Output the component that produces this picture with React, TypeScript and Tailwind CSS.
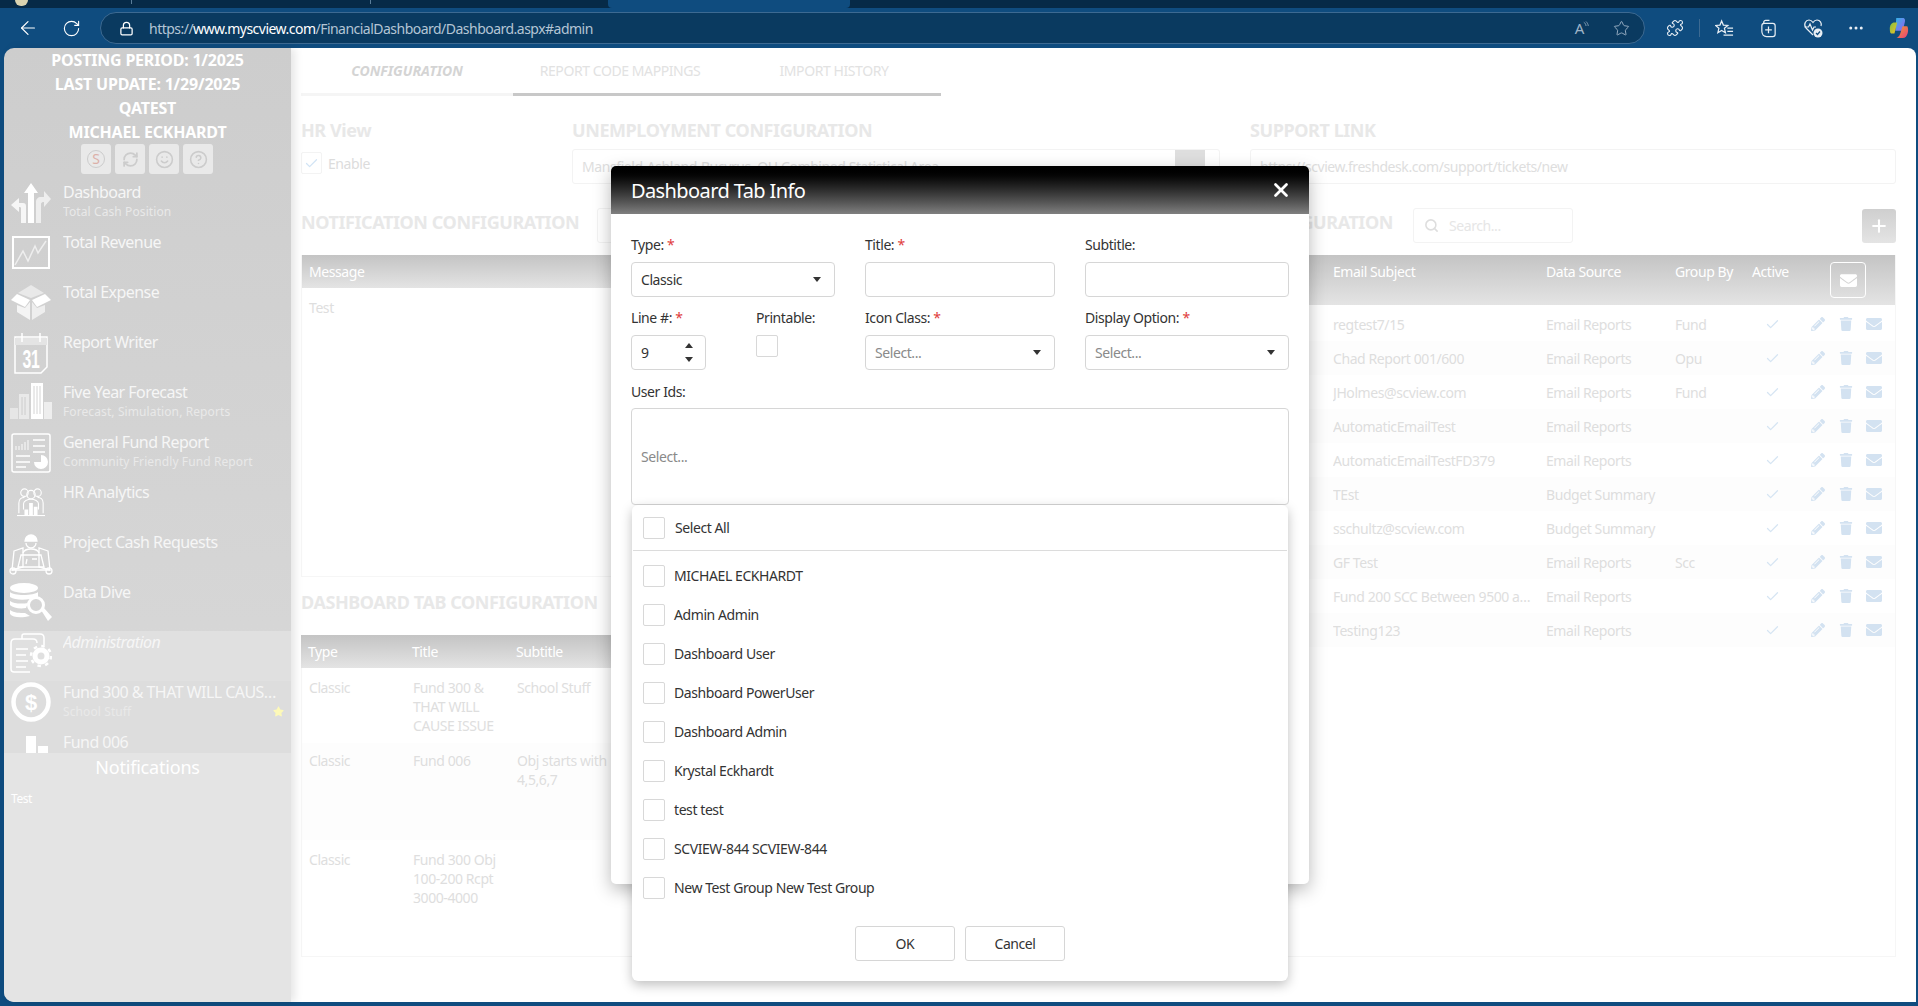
import { ArrowLeft, RotateCw, Lock, Star, Puzzle, Plus, X, Search, Check, MoreHorizontal, RefreshCw, Smile, HelpCircle } from "lucide-react";
import { FaPencilAlt, FaTrash, FaEnvelope, FaStar } from "react-icons/fa";
import type { ReactNode } from "react";

const wh = "#ffffff";

const icons: Record<string, ReactNode> = {
    dashboard: (
        <svg viewBox="0 0 40 40" className="w-10 h-10" fill={wh}>
            <path d="M20 0l7 10h-4v30h-6V10h-4z" />
            <path d="M25 40V19c0-3 2-5 5-5h3V8l7 8-7 8v-5h-1c-1 0-2 1-2 2v19z" fill="#eeeeee" />
            <path d="M15 40V23c0-2-1-3-3-3H8v-5l-8 7 8 7v-5h1c1 0 1 1 1 2v14z" fill="#f6f6f6" />
        </svg>
    ),
    revenue: (
        <svg viewBox="0 0 40 40" className="w-10 h-10" fill="none" stroke={wh}>
            <rect x="2" y="4" width="36" height="31" strokeWidth="2" />
            <path d="M4 32l8-14 5 10 7-15 3 7 8-12" strokeWidth="1.500" stroke="#eeeeee" />
        </svg>
    ),
    expense: (
        <svg viewBox="0 0 40 40" className="w-10 h-10" fill={wh}>
            <path d="M20 2L33 10 20 15 7 10z" fill="#e9e9e9" />
            <path d="M6 11l13 6-5 7-14-7z" />
            <path d="M34 11l6 6-14 7-5-7z" />
            <path d="M6 22l8 3 5-6v18L6 29z" fill="#f4f4f4" />
            <path d="M34 22l-8 3-5-6v18l13-8z" fill="#eeeeee" />
        </svg>
    ),
    report: (
        <svg viewBox="0 0 40 44" className="w-10 h-11 -mt-[2px]" fill="none" stroke={wh}>
            <path d="M4 6h32v30l-6 6H4z" strokeWidth="1.500" />
            <rect x="4" y="7" width="32" height="7" fill="#e4e4e4" stroke="none" />
            <path d="M11 2v9M29 2v9" strokeWidth="1.500" />
            <text x="20" y="37" textAnchor="middle" fontSize="25" fontFamily="'Liberation Sans', sans-serif" fontWeight="700" fill={wh} stroke="none" textLength="17" lengthAdjust="spacingAndGlyphs">31</text>
        </svg>
    ),
    forecast: (
        <svg viewBox="0 0 42 36" className="w-[42px] h-9" fill={wh}>
            <rect x="0" y="25" width="8" height="11" fill="#e6e6e6" />
            <rect x="9" y="11" width="10" height="25" fill="#e9e9e9" />
            <rect x="21" y="0" width="12" height="36" />
            <rect x="34" y="19" width="8" height="17" fill="#eeeeee" />
            <path d="M24 3v28M27 3v28M30 3v28" stroke="#d4d4d4" strokeWidth="1" />
            <path d="M12 14v18M15 14v18" stroke="#cccccc" strokeWidth="1" />
        </svg>
    ),
    fund: (
        <svg viewBox="0 0 40 40" className="w-10 h-10" fill="none" stroke={wh}>
            <rect x="1" y="1" width="38" height="38" rx="2" strokeWidth="1.500" />
            <path d="M5 17V13M8 17v-4M11 17V11M14 17V9M17 17V7" strokeWidth="1.500" stroke="#eeeeee" />
            <path d="M22 7h12M22 13h12M22 19h12M5 23h14M5 29h14M5 34h10" strokeWidth="1.500" />
            <path d="M30 22a7 7 0 1 1-7 7h7z" fill={wh} stroke="none" />
        </svg>
    ),
    hr: (
        <svg viewBox="0 0 30 32" className="w-7 h-8 mt-[3px]" fill="none" stroke={wh} strokeWidth="1.200">
            <circle cx="8" cy="6" r="4" />
            <circle cx="22" cy="6" r="4" />
            <circle cx="15" cy="8" r="4.500" />
            <path d="M2 28V17c0-4 3-6 6-6M28 28V17c0-4-3-6-6-6M7 24v-6c0-3 4-5 8-5s8 2 8 5v6" />
            <path d="M8 30V24h4v6zM13 30V17h4v13zM18 30V21h4v9z" fill={wh} stroke="none" />
            <path d="M0 30.500h30" />
        </svg>
    ),
    project: (
        <svg viewBox="0 0 44 42" className="w-11 h-[42px]" fill="none" stroke={wh} strokeWidth="1.300">
            <path d="M16 8a6 6 0 0 1 12 0z" fill={wh} />
            <path d="M17 10a5 5 0 0 0 10 0" />
            <path d="M14 20c1-3 4-4 8-4s7 1 8 4" />
            <path d="M5 18l9-3v19L3 37zM39 18l-9-3v19l11 3z" />
            <path d="M3 37h38M12 22h20l3 12H9zM17 31l1-5M23 26h5" />
            <circle cx="4" cy="38" r="3" />
            <circle cx="40" cy="38" r="3" />
        </svg>
    ),
    data: (
        <svg viewBox="0 0 42 40" className="w-[42px] h-10" fill={wh}>
            <ellipse cx="14" cy="5" rx="14" ry="5" />
            <path d="M0 9c3 4 24 4 28 0v5c-8 3-22 4-28 0zM0 18c4 3 12 3 18 2l-2 5c-6 1-13 0-16-3zM0 27c4 3 10 3 15 3l5 3c-8 2-17 2-20-2z" />
            <circle cx="26" cy="22" r="7.500" fill="none" stroke={wh} strokeWidth="3" />
            <path d="M31 27l3-2 8 9-4 4z" />
        </svg>
    ),
    admin: (
        <svg viewBox="0 0 42 40" className="w-[42px] h-10" fill="none" stroke={wh} strokeWidth="1.500">
            <path d="M12 6V3c0-1 1-2 2-2h16c3 0 4 2 4 4v7" />
            <path d="M20 39H4c-2 0-3-1-3-3V10c0-2 1-4 4-4h18c3 0 4 2 4 4" />
            <path d="M6 16h12M6 22h10M6 28h12M6 34h10" />
            <circle cx="31" cy="23" r="6" strokeWidth="5" />
            <circle cx="31" cy="23" r="10" strokeWidth="2.500" strokeDasharray="3.500 4.350" />
        </svg>
    ),
    dollar: (
        <svg viewBox="0 0 40 40" className="w-10 h-10 -mt-[1px]">
            <circle cx="20" cy="20" r="17.500" fill="none" stroke={wh} strokeWidth="4.500" />
            <text x="20" y="28" textAnchor="middle" fontSize="22" fontWeight="700" fontFamily="'Liberation Sans', sans-serif" fill={wh}>$</text>
        </svg>
    ),
    bars: (
        <svg viewBox="0 0 40 40" className="w-10 h-10" fill={wh}>
            <rect x="15" y="3" width="10" height="37" />
            <rect x="27" y="13" width="10" height="27" />
        </svg>
    ),
};

const navItems = [
    { icon: "dashboard", title: "Dashboard", sub: "Total Cash Position" },
    { icon: "revenue", title: "Total Revenue" },
    { icon: "expense", title: "Total Expense" },
    { icon: "report", title: "Report Writer" },
    { icon: "forecast", title: "Five Year Forecast", sub: "Forecast, Simulation, Reports" },
    { icon: "fund", title: "General Fund Report", sub: "Community Friendly Fund Report" },
    { icon: "hr", title: "HR Analytics" },
    { icon: "project", title: "Project Cash Requests" },
    { icon: "data", title: "Data Dive" },
    { icon: "admin", title: "Administration", active: true },
    { icon: "dollar", title: "Fund 300 & THAT WILL CAUSE ISSUE", sub: "School Stuff", star: true },
    { icon: "bars", title: "Fund 006" },
];

const emailRows = [
    ["regtest7/15", "Email Reports", "Fund"],
    ["Chad Report 001/600", "Email Reports", "Opu"],
    ["JHolmes@scview.com", "Email Reports", "Fund"],
    ["AutomaticEmailTest", "Email Reports", ""],
    ["AutomaticEmailTestFD379", "Email Reports", ""],
    ["TEst", "Budget Summary", ""],
    ["sschultz@scview.com", "Budget Summary", ""],
    ["GF Test", "Email Reports", "Scc"],
    ["Fund 200 SCC Between 9500 and 9599", "Email Reports", ""],
    ["Testing123", "Email Reports", ""],
];

const users = [
    "MICHAEL ECKHARDT",
    "Admin Admin",
    "Dashboard User",
    "Dashboard PowerUser",
    "Dashboard Admin",
    "Krystal Eckhardt",
    "test test",
    "SCVIEW-844 SCVIEW-844",
    "New Test Group New Test Group",
];

function Caret() {
    return <span className="w-0 h-0 border-x-[4px] border-x-transparent border-t-[5px] border-t-[#333]" />;
}

function Req() {
    return <span className="text-[#e03c3c]"> *</span>;
}

function Label({ children }: { children: ReactNode }) {
    return <div className="h-[17px] mb-[9px] text-[14px] leading-[17px] text-[#333]">{children}</div>;
}

function SelectBox({ value }: { value: string }) {
    return (
        <div className="h-[35px] border border-[#d6d6d6] rounded-[4px] flex items-center justify-between pl-[9px] pr-[13px] text-[14px]">
            <span className={value === "Classic" ? "text-[#333]" : "text-[#8a8a8a]"}>{value}</span>
            <Caret />
        </div>
    );
}

function Box() {
    return <span className="block w-[22px] h-[22px] border border-[#d8d8d8] rounded-[2px] bg-white shrink-0" />;
}

function Sidebar() {
    return (
        <aside className="w-[287px] h-full shrink-0 rounded-bl-[10px] rounded-tl-[10px] overflow-hidden flex flex-col bg-gradient-to-b from-[#cdcdcd] to-[#dcdcdc] shadow-[4px_0_8px_rgba(0,0,0,0.1)] z-10">
            <div className="text-center text-white font-bold text-[16px] leading-[24px] tracking-[-0.2px]">
                <div>POSTING PERIOD: 1/2025</div>
                <div>LAST UPDATE: 1/29/2025</div>
                <div>QATEST</div>
                <div>MICHAEL ECKHARDT</div>
            </div>
            <div className="flex gap-[4px] pl-[77px] h-[30px]">
                <span className="w-[30px] h-[30px] rounded-[3px] bg-[#e9e9e9] flex items-center justify-center text-[14px] text-[#dcb0a8]">
                    <span className="w-[18px] h-[18px] rounded-full border border-[#cccccc] flex items-center justify-center leading-none">S</span>
                </span>
                <span className="w-[30px] h-[30px] rounded-[3px] bg-[#e9e9e9] flex items-center justify-center"><RefreshCw size={17} className="text-[#cccccc]" strokeWidth={2.500} /></span>
                <span className="w-[30px] h-[30px] rounded-[3px] bg-[#e9e9e9] flex items-center justify-center"><Smile size={19} className="text-[#cccccc]" /></span>
                <span className="w-[30px] h-[30px] rounded-[3px] bg-[#e9e9e9] flex items-center justify-center"><HelpCircle size={19} className="text-[#cccccc]" /></span>
            </div>
            <nav className="mt-[7px] h-[572px] overflow-hidden shrink-0">
                {navItems.map((item) => (
                    <div
                        key={item.title}
                        className={`h-[50px] flex relative ${item.active ? "bg-[#e0e0e0]" : item.star || item.icon === "bars" ? "bg-[#dddddd]" : ""}`}
                    >
                        <div className="w-[59px] h-[50px] shrink-0 flex justify-center items-start pt-[2px] pr-[5px]">{icons[item.icon]}</div>
                        <div className="min-w-0 flex-1 pr-[7px]">
                            <div className={`text-[16px] leading-[22px] tracking-[-0.55px] truncate text-[#f6f6f6] ${item.active ? "italic" : ""}`}>{item.title}</div>
                            {item.sub && <div className="text-[12px] leading-[18px] tracking-[0.1px] text-[#e9e9e9] truncate">{item.sub}</div>}
                        </div>
                        {item.star && <FaStar className="absolute right-[7px] top-[25px] text-[#fdf9b8]" size={11} />}
                    </div>
                ))}
            </nav>
            <div className="flex-1 bg-[#e4e4e4] text-white">
                <div className="text-center text-[18px] leading-[28px] tracking-[-0.2px]">Notifications</div>
                <div className="mt-[8px] pl-[7px] text-[12px] leading-[20px]">Test</div>
            </div>
        </aside>
    );
}

function TableHead({ children, className }: { children: ReactNode; className: string }) {
    return <div className={`bg-gradient-to-b from-[#c4c4c4] to-[#e4e4e4] text-white text-[14px] ${className}`}>{children}</div>;
}

function Main() {
    const heading = "text-[18px] leading-[24px] font-bold text-[#e8e8e8] whitespace-nowrap";
    const input = "h-[35px] border border-[#f3f3f3] rounded-[3px] flex items-center text-[14px] text-[#dedede] whitespace-nowrap overflow-hidden";
    return (
        <main className="flex-1 min-w-0 h-full bg-white rounded-tr-[8px] pl-[10px] pr-[20px] flex flex-col">
            <div className="flex h-[45px] text-[14px] text-[#e2e2e2] items-center shrink-0">
                <div className="w-[212px] text-center italic font-bold tracking-[0px] text-[#d4d4d4]">CONFIGURATION</div>
                <div className="w-[214px] text-center">REPORT CODE MAPPINGS</div>
                <div className="w-[214px] text-center">IMPORT HISTORY</div>
            </div>
            <div className="flex h-[3px] shrink-0">
                <div className="w-[212px] bg-[#f5f5f5]" />
                <div className="w-[428px] bg-[#c8c8c8]" />
            </div>
            <div className="flex mt-[22px] shrink-0">
                <div className="w-[271px]">
                    <div className={heading}>HR View</div>
                    <div className="mt-[10px] flex items-center gap-[6px] text-[14px] text-[#dcdcdc]">
                        <span className="w-[21px] h-[22px] border border-[#f3f3f3] rounded-[2px] flex items-center justify-center">
                            <Check size={15} className="text-[#d2e4f5]" />
                        </span>
                        Enable
                    </div>
                </div>
                <div className="w-[678px]">
                    <div className={heading}>UNEMPLOYMENT CONFIGURATION</div>
                    <div className={`${input} w-[648px] mt-[7px] pl-[9px] relative`}>
                        Mansfield-Ashland-Bucyrus, OH Combined Statistical Area
                        <span className="absolute right-[14px] top-0 w-[30px] h-full bg-[#dedede]" />
                    </div>
                </div>
                <div className="flex-1">
                    <div className={heading}>SUPPORT LINK</div>
                    <div className={`${input} mt-[7px] pl-[9px]`}>https://scview.freshdesk.com/support/tickets/new</div>
                </div>
            </div>
            <div className="flex flex-1 min-h-0 mt-[24px] gap-[20px]">
                <div className="w-[844px] shrink-0">
                    <div className="flex items-center gap-[18px] h-[35px]">
                        <div className={`${heading} pb-[7px]`}>NOTIFICATION CONFIGURATION</div>
                        <div className={`${input} flex-1`} />
                    </div>
                    <div className="mt-[12px] h-[322px] border border-[#f6f6f6] border-t-0">
                        <TableHead className="h-[33px] flex items-center pl-[7px]">Message</TableHead>
                        <div className="pl-[7px] pt-[10px] text-[14px] leading-[20px] text-[#dedede]">Test</div>
                    </div>
                    <div className={`${heading} mt-[13px]`}>DASHBOARD TAB CONFIGURATION</div>
                    <TableHead className="mt-[21px] h-[33px] grid grid-cols-[104px_104px_1fr] items-center pl-[7px]">
                        <span>Type</span>
                        <span>Title</span>
                        <span>Subtitle</span>
                    </TableHead>
                    <div className="h-[289px] border border-[#f6f6f6] border-t-0 text-[14px] leading-[19px] text-[#dedede]">
                        <div className="h-[75px] pt-[10px] pl-[7px] grid grid-cols-[104px_104px_110px]">
                            <span>Classic</span>
                            <span>Fund 300 & THAT WILL CAUSE ISSUE</span>
                            <span>School Stuff</span>
                        </div>
                        <div className="h-[97px] pt-[8px] pl-[7px] grid grid-cols-[104px_104px_110px] bg-[#fdfdfd]">
                            <span>Classic</span>
                            <span>Fund 006</span>
                            <span>Obj starts with 4,5,6,7</span>
                        </div>
                        <div className="pt-[10px] pl-[7px] grid grid-cols-[104px_104px_110px]">
                            <span>Classic</span>
                            <span>Fund 300 Obj 100-200 Rcpt 3000-4000</span>
                            <span />
                        </div>
                    </div>
                </div>
                <div className="flex-1 min-w-0">
                    <div className="flex items-center h-[35px]">
                        <div className={`${heading} pb-[7px] w-[228px] shrink-0 text-right`}>EMAIL CONFIGURATION</div>
                        <div className={`${input} w-[160px] ml-[20px] pl-[10px] gap-[10px] text-[#e6e6e6]`}>
                            <Search size={15} className="text-[#dedede]" strokeWidth={2.500} />
                            Search...
                        </div>
                        <div className="ml-auto w-[34px] h-[34px] rounded-[3px] bg-gradient-to-b from-[#cfcfcf] to-[#e4e4e4] flex items-center justify-center">
                            <Plus size={20} className="text-white" strokeWidth={2.500} />
                        </div>
                    </div>
                    <div className="mt-[12px] h-[702px] border border-[#f6f6f6] border-t-0">
                        <TableHead className="h-[50px] flex pl-[167px] relative">
                            <span className="w-[213px] pt-[7px] leading-[20px]">Email Subject</span>
                            <span className="w-[129px] pt-[7px] leading-[20px]">Data Source</span>
                            <span className="w-[77px] pt-[7px] leading-[20px]">Group By</span>
                            <span className="pt-[7px] leading-[20px]">Active</span>
                            <span className="absolute right-[29px] top-[7px] w-[36px] h-[36px] rounded-[4px] border border-white flex items-center justify-center">
                                <FaEnvelope className="text-white" size={17} />
                            </span>
                        </TableHead>
                        <div className="pt-[2px]">
                            {emailRows.map((row, i) => (
                                <div
                                    key={row[0]}
                                    className={`h-[34px] flex items-center pl-[167px] text-[14px] text-[#dedede] ${i % 2 ? "bg-[#fdfdfd]" : ""}`}
                                >
                                    <span className="w-[213px] pr-[11px] truncate">{row[0]}</span>
                                    <span className="w-[129px]">{row[1]}</span>
                                    <span className="w-[77px]">{row[2]}</span>
                                    <span className="w-[40px] flex justify-center"><Check size={15} className="text-[#d6e5f3]" /></span>
                                    <span className="ml-[19px] flex items-center text-[#d3e2f1]">
                                        <FaPencilAlt size={14} />
                                        <FaTrash size={14} className="ml-[14px]" />
                                        <FaEnvelope size={16} className="ml-[13px]" />
                                    </span>
                                </div>
                            ))}
                        </div>
                    </div>
                </div>
            </div>
        </main>
    );
}

function Modal() {
    return (
        <div className="absolute left-[611px] top-[166px] w-[698px] h-[718px] bg-white rounded-[5px] shadow-[0_6px_18px_rgba(0,0,0,0.28)] z-20 text-[#333]">
            <div className="h-[48px] rounded-t-[5px] bg-gradient-to-b from-black to-[#808080] flex items-center justify-between pl-[20px] pr-[17px] text-white">
                <span className="text-[20px] leading-[28px] tracking-[-0.6px] pt-[2px]">Dashboard Tab Info</span>
                <X size={22} strokeWidth={3} />
            </div>
            <div className="px-[20px] pt-[22px]">
                <div className="grid grid-cols-[204px_190px_204px] gap-x-[30px]">
                    <div>
                        <Label>Type:<Req /></Label>
                        <SelectBox value="Classic" />
                    </div>
                    <div>
                        <Label>Title:<Req /></Label>
                        <div className="h-[35px] border border-[#d6d6d6] rounded-[4px]" />
                    </div>
                    <div>
                        <Label>Subtitle:</Label>
                        <div className="h-[35px] border border-[#d6d6d6] rounded-[4px]" />
                    </div>
                </div>
                <div className="grid grid-cols-[204px_190px_204px] gap-x-[30px] mt-[12px]">
                    <div className="flex">
                        <div className="w-[125px]">
                            <Label>Line #:<Req /></Label>
                            <div className="w-[75px] h-[35px] border border-[#d6d6d6] rounded-[4px] flex items-center justify-between pl-[9px] pr-[12px] text-[14px]">
                                9
                                <span className="flex flex-col gap-[9px]">
                                    <span className="w-0 h-0 border-x-[4px] border-x-transparent border-b-[5px] border-b-[#333]" />
                                    <span className="w-0 h-0 border-x-[4px] border-x-transparent border-t-[5px] border-t-[#333]" />
                                </span>
                            </div>
                        </div>
                        <div>
                            <Label>Printable:</Label>
                            <div className="mt-[1px]"><Box /></div>
                        </div>
                    </div>
                    <div>
                        <Label>Icon Class:<Req /></Label>
                        <SelectBox value="Select..." />
                    </div>
                    <div>
                        <Label>Display Option:<Req /></Label>
                        <SelectBox value="Select..." />
                    </div>
                </div>
                <div className="mt-[13px]">
                    <Label>User Ids:</Label>
                    <div className="-mt-[1px] h-[97px] border border-[#d6d6d6] rounded-[4px] flex items-center pl-[9px] text-[14px] text-[#8a8a8a]">Select...</div>
                </div>
            </div>
            <div className="absolute left-[21px] top-[339px] w-[656px] h-[476px] bg-white rounded-[6px] shadow-[0_4px_12px_rgba(0,0,0,0.25)] text-[14px]">
                <div className="h-[46px] mx-[1px] border-b border-[#dcdcdc] flex items-center pl-[10px] gap-[10px]">
                    <Box />
                    <span>Select All</span>
                </div>
                <div className="pt-[5px]">
                    {users.map((user) => (
                        <div key={user} className="h-[39px] flex items-center pl-[11px] gap-[9px]">
                            <Box />
                            <span>{user}</span>
                        </div>
                    ))}
                </div>
                <div className="flex justify-center gap-[10px] mt-[19px]">
                    <span className="w-[100px] h-[35px] border border-[#d6d6d6] rounded-[3px] flex items-center justify-center">OK</span>
                    <span className="w-[100px] h-[35px] border border-[#d6d6d6] rounded-[3px] flex items-center justify-center">Cancel</span>
                </div>
            </div>
        </div>
    );
}

function BrowserChrome() {
    const tb = "text-[#e8eef4]";
    return (
        <>
            <div className="h-[8px] bg-[#062a47] flex shrink-0 relative">
                <span className="ml-[15px] w-[13px] h-[6px] rounded-b-full bg-[#d9d3b0]" />
                <span className="absolute left-[131px] top-0 h-[4px] w-px bg-[#5a7d99]" />
                <span className="absolute left-[370px] top-0 h-[4px] w-px bg-[#5a7d99]" />
                <span className="absolute left-[608px] top-0 w-[242px] h-full bg-[#0f4c7f] rounded-b-[4px]" />
            </div>
            <div className="h-[40px] bg-[#0f4c7f] flex items-center shrink-0">
                <ArrowLeft size={22} className="ml-[17px] text-white" strokeWidth={1.300} />
                <RotateCw size={19} className="ml-[23px] text-white" strokeWidth={1.400} />
                <div className="ml-[19px] w-[1545px] h-[32px] rounded-full bg-[#0a3a60] border border-[#3d6a92] flex items-center">
                    <Lock size={15} className="ml-[18px] text-white" />
                    <span className="ml-[15px] text-[14px] tracking-[-0.52px] text-[#b4c5d5]">
                        https://<span className="text-white">www.myscview.com</span>/FinancialDashboard/Dashboard.aspx#admin
                    </span>
                    <span className="ml-auto flex items-start text-[#9fb4c7] text-[15px] leading-none">
                        A
                        <svg viewBox="0 0 8 12" className="w-[6px] h-[10px] -ml-[1px]" fill="none" stroke="#9fb4c7" strokeWidth="1">
                            <path d="M1 1c2 1 3 3 3 5M4 0c2 2 3 4 3 6" />
                        </svg>
                    </span>
                    <Star size={17} className="ml-[24px] mr-[14px] text-[#9fb4c7]" strokeWidth={1.300} />
                </div>
                <Puzzle size={18} className={`ml-[21px] ${tb}`} strokeWidth={1.500} />
                <span className="ml-[15px] w-px h-[18px] bg-[#3d6a92]" />
                <svg viewBox="0 0 20 20" className="ml-[15px] w-[19px] h-[19px]" fill="none" stroke="#e8eef4" strokeWidth="1.300">
                    <path d="M7 2l1.800 4.400 4.700.4-3.600 3 1.100 4.600L7 12l-4 2.400 1.100-4.600-3.600-3 4.700-.4z" />
                    <path d="M13 9.500h6M13 13h6M9 17h10" />
                </svg>
                <svg viewBox="0 0 20 20" className="ml-[25px] w-[19px] h-[19px]" fill="none" stroke="#e8eef4" strokeWidth="1.300">
                    <path d="M5 5V3.500C5 2.500 6 1.500 7 1.500h4" />
                    <path d="M3 7c0-1.500 1-2.500 2.500-2.500h9C16 4.500 17 5.500 17 7v9c0 1.500-1 2.500-2.500 2.500H8C5 18.500 3 16 3 13z" />
                    <path d="M10 8v7M6.500 11.500h7" />
                </svg>
                <svg viewBox="0 0 20 20" className="ml-[25px] w-[20px] h-[20px]" fill="none" stroke="#e8eef4" strokeWidth="1.200">
                    <path d="M10 17L3 10C0 6 3 2 6 2c2 0 3 1 4 2.500C11 3 12 2 14 2c3 0 5 3 4 6" />
                    <path d="M1.500 9h4l1.500-3 2.500 6 1.500-3h2" />
                    <circle cx="15" cy="15" r="4.500" fill="#e8eef4" stroke="none" />
                    <path d="M13 15l1.500 1.500 2.500-3" stroke="#0f4c7f" />
                </svg>
                <MoreHorizontal size={18} className={`ml-[24px] ${tb}`} />
                <svg viewBox="0 0 24 24" className="ml-[23px] w-[22px] h-[24px]">
                    <defs>
                        <linearGradient id="cp1" x1="0" y1="0" x2="1" y2="1">
                            <stop offset="0" stopColor="#2fb8e8" />
                            <stop offset="1" stopColor="#9a5cf0" />
                        </linearGradient>
                        <linearGradient id="cp2" x1="0" y1="0" x2="1" y2="1">
                            <stop offset="0" stopColor="#7dc242" />
                            <stop offset="1" stopColor="#f6c026" />
                        </linearGradient>
                        <linearGradient id="cp3" x1="0" y1="0" x2="1" y2="1">
                            <stop offset="0" stopColor="#f0a030" />
                            <stop offset="1" stopColor="#e8407a" />
                        </linearGradient>
                    </defs>
                    <path d="M9 1h7c3 0 3 3 2 6l-2 8H8z" fill="url(#cp1)" />
                    <path d="M2 12c0-3 2-6 5-6h3L7 18H4c-2 0-2-3-2-6z" fill="url(#cp2)" />
                    <path d="M16 10h5c2 3 1 13-5 13H8c3 0 5-3 6-7z" fill="url(#cp3)" />
                </svg>
            </div>
        </>
    );
}

export default function App() {
    return (
        <div className="relative w-[1918px] h-[1006px] overflow-hidden bg-[#0f4c7f] flex flex-col tracking-[-0.42px] font-['Noto_Sans',sans-serif]">
            <BrowserChrome />
            <div className="flex-1 min-h-0 flex pl-[4px] pr-[2px] pb-[4px]">
                <Sidebar />
                <Main />
            </div>
            <Modal />
        </div>
    );
}
